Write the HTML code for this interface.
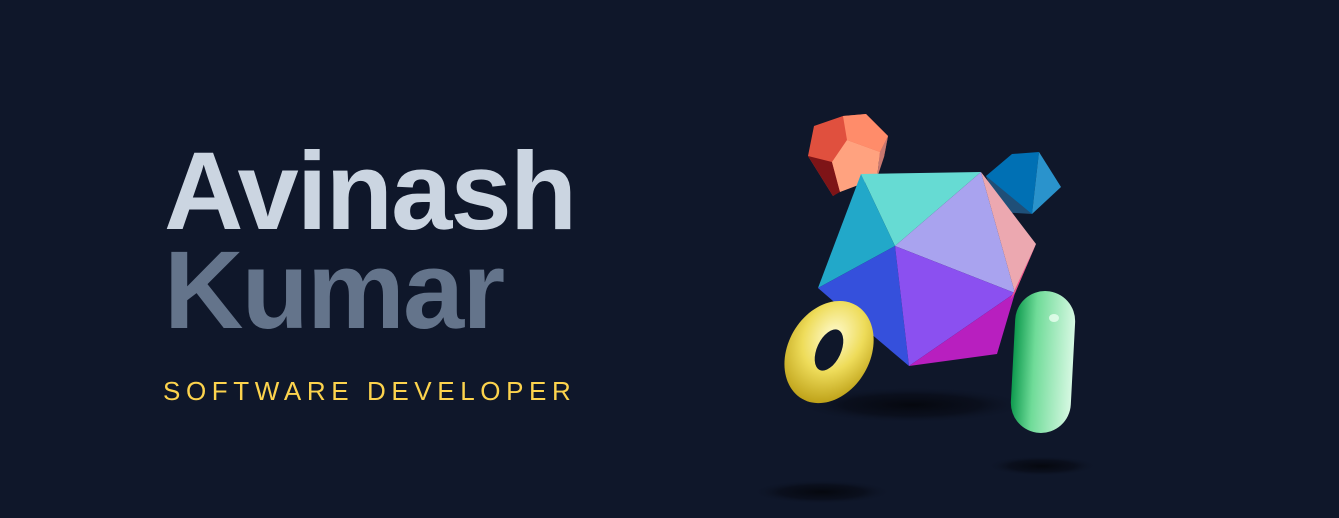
<!DOCTYPE html>
<html><head><meta charset="utf-8"><style>
html,body{margin:0;padding:0;width:1339px;height:518px;background:#0f172a;overflow:hidden;font-family:"Liberation Sans",sans-serif}
.n{position:absolute;left:164px;font-weight:700;font-size:110px;letter-spacing:-1.8px;line-height:1}
.a{top:137px;color:#cbd5e1}
.k{top:236px;color:#64748b}
.s{position:absolute;left:163px;top:376px;font-size:26px;letter-spacing:5.6px;color:#fcd34d;white-space:nowrap}
svg{position:absolute;left:0;top:0}
</style></head><body>
<div class="n a">Avinash</div>
<div class="n k">Kumar</div>
<div class="s">SOFTWARE DEVELOPER</div>
<svg width="1339" height="518" viewBox="0 0 1339 518">
<defs>
<radialGradient id="sh"><stop offset="0" stop-color="#05070d" stop-opacity=".95"/><stop offset=".6" stop-color="#070a14" stop-opacity=".6"/><stop offset="1" stop-color="#0f172a" stop-opacity="0"/></radialGradient>
<radialGradient id="ty" cx="45%" cy="35%" r="70%"><stop offset="0" stop-color="#fffbd0"/><stop offset=".5" stop-color="#eedc5a"/><stop offset="1" stop-color="#b89a10"/></radialGradient>
<linearGradient id="gc" x1="0" x2="1"><stop offset="0" stop-color="#0e9a4e"/><stop offset=".35" stop-color="#6fdb98"/><stop offset="1" stop-color="#d6f8e2"/></linearGradient>
</defs>
<ellipse cx="912" cy="405" rx="115" ry="18" fill="url(#sh)"/>
<ellipse cx="1042" cy="466" rx="55" ry="10" fill="url(#sh)"/>
<ellipse cx="822" cy="492" rx="70" ry="12" fill="url(#sh)"/>
<polygon points="814,126 843,116 866,114 888,136 884,157 833,196 808,156" fill="#e0503e"/>
<polygon points="843,116 866,114 888,136 880,152 847,140" fill="#ff8c6a"/>
<polygon points="808,156 832,162 840,192 833,196" fill="#7e1417"/>
<polygon points="847,140 880,152 877,178 840,192 832,162" fill="#ffa27f"/>
<polygon points="880,152 888,136 884,157 877,178" fill="#c87870"/>
<polygon points="986,176 1012,154 1039,152 1032,214 993,190" fill="#0070b4"/>
<polygon points="1039,152 1061,187 1032,214" fill="#2a93cc"/>
<polygon points="986,176 1032,214 1000,212" fill="#1f4f78"/>
<polygon points="861,174 981,172 895,246" fill="#66dbd3"/>
<polygon points="861,174 895,246 818,288" fill="#22a8c9"/>
<polygon points="981,172 1015,293 895,246" fill="#a9a3ef"/>
<polygon points="981,172 1036,244 1015,293" fill="#eca8b0"/>
<polygon points="818,288 895,246 909,366 870,333" fill="#3550dc"/>
<polygon points="895,246 1015,293 909,366" fill="#8b50f0"/>
<polygon points="909,366 1015,293 997,354" fill="#b81fbf"/>
<polygon points="1036,244 1015,293 1010,300" fill="#f0508a"/>
<g transform="rotate(30 829 352)">
<path fill="url(#ty)" d="M829,298 a41,54 0 1,0 0.1,0 Z"/>
</g>
<ellipse cx="829" cy="350" rx="12" ry="22" transform="rotate(25 829 350)" fill="#0f172a"/>
<rect x="1013" y="291" width="60" height="142" rx="30" fill="url(#gc)" transform="rotate(3 1043 362)"/>
<ellipse cx="1054" cy="318" rx="5" ry="4" fill="#eafff0" opacity=".8"/>
</svg>
</body></html>
